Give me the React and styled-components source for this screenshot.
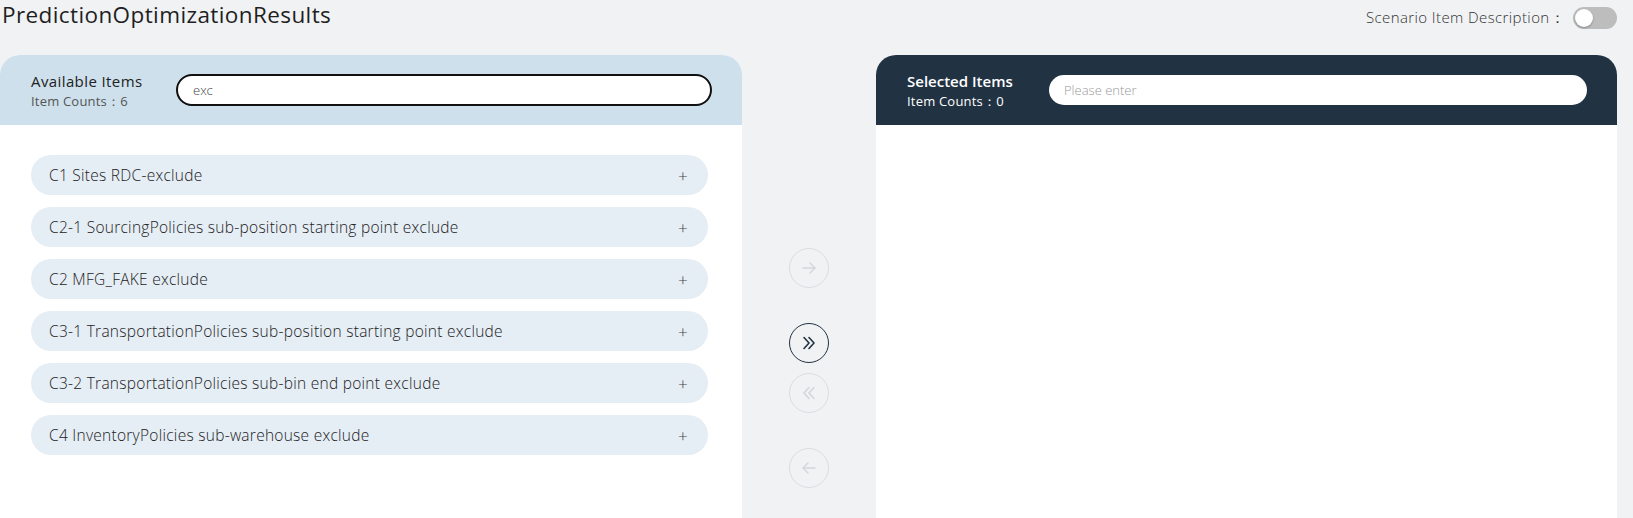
import React from "react";
import styled, { createGlobalStyle } from "styled-components";

const Global = createGlobalStyle`
  html, body { margin: 0; padding: 0; background: #f1f2f4; }
  body { font-family: "Open Sans", "Noto Sans", sans-serif; color: #222; }
  * { box-sizing: border-box; }
`;

const Page = styled.div`
  width: 1633px;
  height: 518px;
  overflow: hidden;
  padding: 0 16px 0 0;
  display: flex;
  flex-direction: column;
`;

const TopBar = styled.div`
  height: 55px;
  display: flex;
  align-items: flex-start;
  justify-content: space-between;
`;

const Title = styled.h1`
  margin: 0;
  padding-left: 2px;
  font-size: 22.5px;
  font-weight: 400;
  line-height: 30px;
  letter-spacing: 0.4px;
  color: #1f1f1f;
`;

const ToggleRow = styled.div`
  display: flex;
  align-items: center;
  gap: 8px;
  height: 35px;
  font-size: 15px;
  font-weight: 300;
  letter-spacing: 0.4px;
  color: #333;
`;

const Switch = styled.div`
  width: 44px;
  height: 22px;
  border-radius: 11px;
  background: #bdbdbd;
  position: relative;
  &::after {
    content: "";
    position: absolute;
    left: 2px;
    top: 2px;
    width: 18px;
    height: 18px;
    border-radius: 50%;
    background: #fff;
    box-shadow: 0 1px 2px rgba(0,0,0,0.3);
  }
`;

const Main = styled.div`
  flex: 1;
  display: flex;
`;

const Panel = styled.section`
  width: ${p => p.$w}px;
  background: #fff;
  border-radius: 20px 20px 0 0;
  display: flex;
  flex-direction: column;
  overflow: hidden;
`;

const PanelHeader = styled.div`
  height: 70px;
  background: ${p => (p.$dark ? "#213243" : "#cde0ec")};
  display: flex;
  align-items: center;
  padding: 0 30px 0 31px;
`;

const HeadText = styled.div`
  width: ${p => p.$w}px;
  flex-shrink: 0;
  display: flex;
  flex-direction: column;
  gap: 3px;
  color: ${p => (p.$dark ? "#fff" : "#222")};
`;

const HeadTitle = styled.div`
  font-size: 15px;
  font-weight: ${p => (p.$bold ? 600 : 400)};
  letter-spacing: ${p => (p.$bold ? 0 : 0.4)}px;
  line-height: 18px;
`;

const HeadCount = styled.div`
  font-size: 13px;
  line-height: 16px;
  letter-spacing: 0.2px;
  color: ${p => (p.$dark ? "#fff" : "#555")};
`;

const Search = styled.input`
  flex: 1;
  height: ${p => (p.$focused ? 32 : 30)}px;
  border-radius: 16px;
  border: ${p => (p.$focused ? "2px solid #111" : "none")};
  background: #fff;
  padding: 0 0 0 15px;
  font-family: inherit;
  font-size: 13px;
  font-weight: 300;
  color: #444;
  outline: none;
  &::placeholder { color: #999; }
`;

const List = styled.div`
  padding: 30px 34px 0 31px;
  display: flex;
  flex-direction: column;
  gap: 12px;
`;

const Item = styled.div`
  height: 40px;
  border-radius: 20px;
  background: #e5edf5;
  display: flex;
  align-items: center;
  justify-content: space-between;
  padding: 0 20px 0 18px;
  font-size: 15.5px;
  font-weight: 300;
  letter-spacing: 0.27px;
  color: #222;
`;

const Plus = styled.span`
  font-size: 17px;
  font-weight: 300;
  color: #444;
  line-height: 1;
`;

const Middle = styled.div`
  flex: 1;
  display: flex;
  flex-direction: column;
  align-items: center;
  padding-top: 193px;
`;

const CircleBtn = styled.button`
  width: 40px;
  height: 40px;
  border-radius: 50%;
  border: 1px solid ${p => (p.$active ? "#213243" : "#dcdde0")};
  background: transparent;
  color: ${p => (p.$active ? "#213243" : "#d4d5d8")};
  display: flex;
  align-items: center;
  justify-content: center;
  padding: 0;
  margin-top: ${p => p.$mt || 0}px;
`;

const Arrow = ({ dir }) => (
  <svg width="18" height="18" viewBox="0 0 18 18" fill="none" stroke="currentColor" strokeWidth="1.4" strokeLinecap="round" strokeLinejoin="round">
    {dir === "right" ? (
      <>
        <path d="M3 9h12" />
        <path d="M10 4l5 5-5 5" />
      </>
    ) : (
      <>
        <path d="M15 9H3" />
        <path d="M8 4L3 9l5 5" />
      </>
    )}
  </svg>
);

const Double = ({ dir }) => (
  <svg width="18" height="18" viewBox="0 0 18 18" fill="none" stroke="currentColor" strokeWidth="1.6" strokeLinecap="round" strokeLinejoin="round">
    {dir === "right" ? (
      <>
        <path d="M4 3.5l5 5.5-5 5.5" />
        <path d="M9 3.5l5 5.5-5 5.5" />
      </>
    ) : (
      <>
        <path d="M14 3.5L9 9l5 5.5" />
        <path d="M9 3.5L4 9l5 5.5" />
      </>
    )}
  </svg>
);

const items = [
  "C1 Sites RDC-exclude",
  "C2-1 SourcingPolicies sub-position starting point exclude",
  "C2 MFG_FAKE exclude",
  "C3-1 TransportationPolicies sub-position starting point exclude",
  "C3-2 TransportationPolicies sub-bin end point exclude",
  "C4 InventoryPolicies sub-warehouse exclude",
];

export default function App() {
  return (
    <>
      <Global />
      <Page>
        <TopBar>
          <Title>PredictionOptimizationResults</Title>
          <ToggleRow>
            <span>Scenario Item Description：</span>
            <Switch />
          </ToggleRow>
        </TopBar>
        <Main>
          <Panel $w={742}>
            <PanelHeader>
              <HeadText $w={145}>
                <HeadTitle>Available Items</HeadTitle>
                <HeadCount>Item Counts：6</HeadCount>
              </HeadText>
              <Search $focused defaultValue="exc" />
            </PanelHeader>
            <List>
              {items.map(t => (
                <Item key={t}>
                  <span>{t}</span>
                  <Plus>+</Plus>
                </Item>
              ))}
            </List>
          </Panel>
          <Middle>
            <CircleBtn><Arrow dir="right" /></CircleBtn>
            <CircleBtn $active $mt={35}><Double dir="right" /></CircleBtn>
            <CircleBtn $mt={10}><Double dir="left" /></CircleBtn>
            <CircleBtn $mt={35}><Arrow dir="left" /></CircleBtn>
          </Middle>
          <Panel $w={741}>
            <PanelHeader $dark>
              <HeadText $w={142} $dark>
                <HeadTitle $bold>Selected Items</HeadTitle>
                <HeadCount $dark>Item Counts：0</HeadCount>
              </HeadText>
              <Search placeholder="Please enter" />
            </PanelHeader>
          </Panel>
        </Main>
      </Page>
    </>
  );
}
